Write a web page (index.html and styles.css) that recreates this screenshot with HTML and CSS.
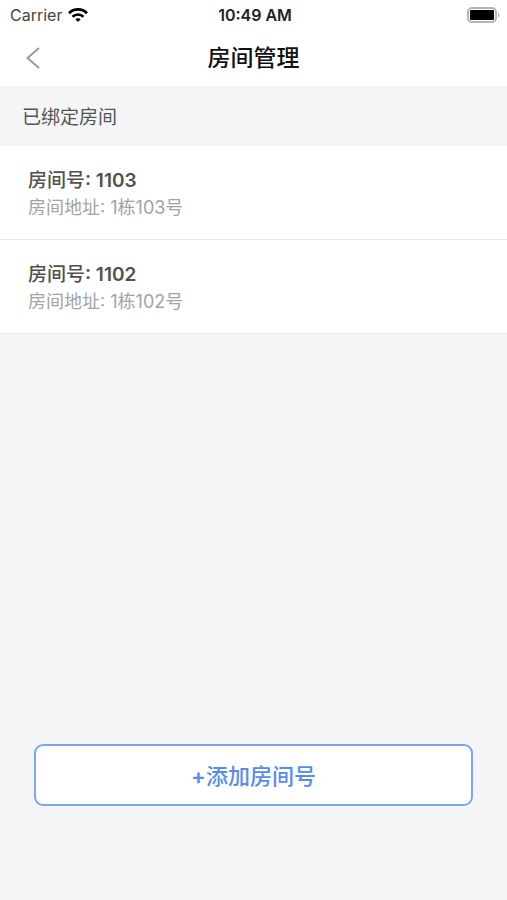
FILE: index.html
```html
<!DOCTYPE html>
<html lang="zh-CN">
<head>
<meta charset="utf-8">
<meta name="viewport" content="width=device-width, initial-scale=1">
<title>房间管理</title>
<link rel="stylesheet" href="styles.css">
</head>
<body>
<div class="screen">
  <div class="status">
    <div class="carrier">
      <span>Carrier</span>
      <svg class="wifi" viewBox="0 0 20 14" aria-hidden="true">
        <path d="M1 5.2C6 .2 14 .2 19 5.2" stroke-width="2.8"/>
        <path d="M4.500 8.700c3.200-3 7.800-3 11 0" stroke-width="2.6"/>
        <path class="dot" d="M10 14l-2.700-2.700c1.500-1.400 3.900-1.400 5.400 0z"/>
      </svg>
    </div>
    <time class="clock">10:49 AM</time>
    <svg class="battery" viewBox="0 0 33 16" aria-hidden="true">
      <rect class="shell" x="1" y="1" width="28" height="14" rx="4"/>
      <rect x="3" y="3" width="24" height="10" rx="1"/>
      <path class="cap" d="M31 5.500c2 .8 2 4.200 0 5z"/>
    </svg>
  </div>
  <header class="nav">
    <button class="back" type="button" aria-label="返回">
      <svg viewBox="0 0 14 22" aria-hidden="true"><path d="M13 1L1.500 11 13 21"/></svg>
    </button>
    <h1 class="title">房间管理</h1>
  </header>
  <main class="content">
    <h2 class="section">已绑定房间</h2>
    <ul class="rooms">
      <li class="room">
        <p class="number">房间号<b>: 1103</b></p>
        <p class="address">房间地址: 1栋103号</p>
      </li>
      <li class="room">
        <p class="number">房间号<b>: 1102</b></p>
        <p class="address">房间地址: 1栋102号</p>
      </li>
    </ul>
  </main>
  <footer class="actions">
    <button class="add" type="button"><b>+</b>添加房间号</button>
  </footer>
</div>
</body>
</html>
```
FILE: styles.css
```css
* {
  box-sizing: border-box;
}

body,
h1,
h2,
p,
ul {
  margin: 0;
  padding: 0;
}

body {
  background: #f3f5f7;
  font-family: Inter, "Noto Sans CJK SC", sans-serif;
}

button {
  font-family: inherit;
  cursor: pointer;
}

.screen {
  display: flex;
  flex-direction: column;
  min-height: 100vh;
}

.status {
  display: grid;
  grid-template-columns: 1fr auto 1fr;
  align-items: center;
  height: 30px;
  padding: 0 7px 0 10px;
  background: #fff;
  color: #222;
  font-size: 16px;
  line-height: 28px;
}

.carrier {
  display: flex;
  align-items: center;
  gap: 6px;
  color: #444;
}

.wifi {
  width: 20px;
  height: 14px;
  fill: none;
  stroke: #000;
}

.wifi .dot {
  fill: #000;
  stroke: none;
}

.clock {
  font-weight: 600;
}

.battery {
  justify-self: end;
  width: 33px;
  height: 16px;
}

.battery .shell {
  fill: #fff;
  stroke: #b4b4b4;
  stroke-width: 2;
}

.battery .cap {
  fill: #b4b4b4;
}

.nav {
  display: grid;
  grid-template-columns: 1fr auto 1fr;
  align-items: center;
  height: 56px;
  padding: 0 16px;
  background: #fff;
}

.back {
  display: flex;
  justify-self: start;
  padding: 10px;
  border: 0;
  background: none;
}

.back svg {
  width: 14px;
  height: 22px;
  fill: none;
  stroke: #999;
  stroke-width: 2;
}

.title {
  color: #111;
  font-size: 23px;
  font-weight: 500;
  line-height: 32px;
}

.content {
  flex: 1;
}

.section {
  padding: 18px 22px 14px;
  color: #555;
  font-size: 19px;
  font-weight: 400;
  line-height: 28px;
}

.rooms {
  list-style: none;
}

.room {
  padding: 21px 28px 18px;
  border-bottom: 1px solid #e6e8ea;
  background: #fff;
}

.number {
  color: #505050;
  font-size: 19px;
  font-weight: 500;
  line-height: 28px;
}

.number b,
.add b {
  font-weight: 600;
}

.address {
  color: #a3a3a3;
  font-size: 18px;
  line-height: 26px;
}

.actions {
  padding: 0 34px 94px;
}

.add {
  display: block;
  width: 100%;
  height: 62px;
  padding: 0 0 2px;
  border: 2px solid #7da5f0;
  border-radius: 9px;
  background: #fff;
  color: #568bf0;
  font-size: 22px;
  font-weight: 500;
}
```
